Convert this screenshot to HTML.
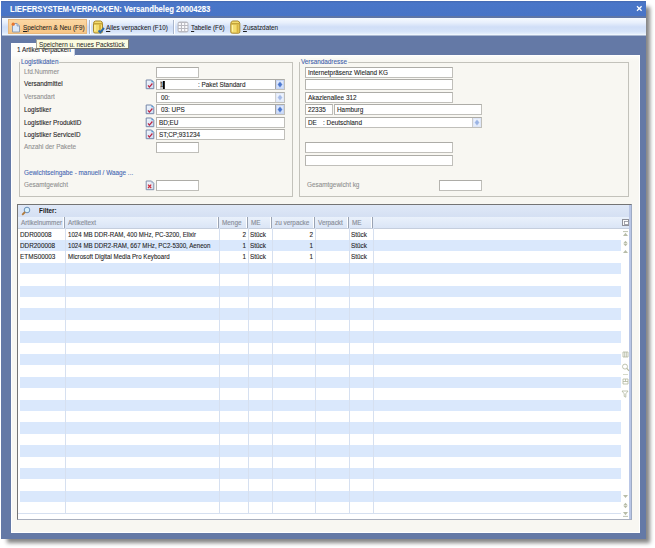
<!DOCTYPE html>
<html><head><meta charset="utf-8">
<style>
*{box-sizing:border-box;margin:0;padding:0}
html,body{width:655px;height:548px;overflow:hidden;background:#fff;position:relative}
body{font-family:"Liberation Sans",sans-serif;font-size:7px;color:#1e1e1e}
.a{position:absolute}
.t{position:absolute;white-space:pre;line-height:8px;transform:scaleX(.91);transform-origin:0 0;-webkit-text-stroke:.1px currentColor}
#shadowR{left:646px;top:7px;width:6px;height:537px;background:linear-gradient(90deg,rgba(0,0,0,.45),rgba(0,0,0,0))}
#shadowB{left:5px;top:538px;width:643px;height:6px;background:linear-gradient(180deg,rgba(0,0,0,.45),rgba(0,0,0,0))}
#win{left:1px;top:1px;width:645px;height:538px;background:#6479a6;box-shadow:5px 5px 4px -1px rgba(0,0,0,.48)}
#title{left:1px;top:1px;width:645px;height:15px;background:linear-gradient(180deg,#4569b0 0,#4a76c8 2px,#4874c6 100%)}
#titleline{left:1px;top:16px;width:645px;height:2px;background:#5f76a6}
#tb{left:2px;top:18px;width:644px;height:18px;background:linear-gradient(180deg,#f6faff 0%,#e8f0fc 25%,#d0def7 50%,#d6e4f9 75%,#e4effc 88%,#f6fcff 94%,#6a80ab 100%)}
#panel{left:11px;top:55px;width:629px;height:478px;background:linear-gradient(180deg,#fdfdfb 0,#f8f7f2 6px);box-shadow:inset 1px 1px 0 #fff,inset -1px -1px 0 #fff}
.sep{position:absolute;top:20px;width:1px;height:14px;background:#a9b6cc;box-shadow:1px 0 0 #fff}
.grp{position:absolute;border:1px solid #c3c2bb}
.gt{position:absolute;color:#4262ac;background:#f8f7f2;padding:0 1px}
.dis{color:#8f8f8f}
.inp{position:absolute;background:#fff;border:1px solid #c0bfba;border-top-color:#adaca7;border-left-color:#b5b4af;height:11px}
.inp span{position:absolute;top:1px;white-space:pre;line-height:8px;transform:scaleX(.91);transform-origin:0 0;-webkit-text-stroke:.1px currentColor}
.dd{position:absolute;right:0;top:0;width:9px;height:9px;background:linear-gradient(180deg,#e4ecfc,#cddcf8);border-left:1px solid #a3a3a3;box-shadow:inset 0 0 0 1px #c5d4f3}
.ico{position:absolute;width:9px;height:10px}
.hd{position:absolute;top:217px;height:11px;background:linear-gradient(180deg,#eaf1fb,#dae5f6);border-right:1px solid #9aa3b3;box-shadow:inset -1px 0 0 #fff}
.hd span{position:absolute;left:2px;top:1.5px;color:#8a8f99;white-space:pre;line-height:8px;transform:scaleX(.91);transform-origin:0 0;-webkit-text-stroke:.15px currentColor}
.row{position:absolute;left:20px;width:601px;height:11.4px}
.vl{position:absolute;top:228px;width:1px;height:285px;background:#d6e0f0}
</style></head><body>
<div class="a" id="win"></div>
<div class="a" id="title"></div>
<div class="t" style="left:10px;top:4.5px;font-size:8.6px;font-weight:bold;color:#fff;letter-spacing:0;transform:scaleX(.895);transform-origin:0 0;line-height:9px">LIEFERSYSTEM-VERPACKEN: Versandbeleg 20004283</div>
<svg class="a" style="left:636px;top:5px" width="7" height="7"><path d="M1 1.2L5.6 5.8M5.6 1.2L1 5.8" stroke="#fff" stroke-width="1.25"/></svg>
<div class="a" id="titleline"></div>
<div class="a" id="tb"></div>
<div class="a" style="left:8px;top:19px;width:79px;height:15px;background:linear-gradient(180deg,#fbd7a3,#f7c584);border:1px solid #e9b87c"></div>
<div class="sep" style="left:89px"></div>
<div class="sep" style="left:173px"></div>
<!-- toolbar icons -->
<svg class="a" style="left:11px;top:22px" width="10" height="11"><path d="M1.5 1.5h4.5l2.5 2.5v6h-7z" fill="#dce8f8" stroke="#8f9cb0" stroke-width="1"/><path d="M6 1.5v2.5h2.5" fill="#b8c8e0" stroke="#8f9cb0" stroke-width=".8"/><circle cx="2.2" cy="2.2" r="1.6" fill="#e8742a"/></svg>
<svg class="a" style="left:92px;top:20px" width="13" height="14"><path d="M1.5 3.5q0-2 2-2.5h5q2 .5 2 2.5v8q0 1.5-1.5 1.5h-6q-1.5 0-1.5-1.5z" fill="#f3dc6e" stroke="#a8862a" stroke-width="1"/><path d="M2 3.8h8.5" stroke="#b9962e" stroke-width="1.2"/><path d="M8 4.5v8" stroke="#d9b440" stroke-width="2"/><path d="M3 5v6" stroke="#fff3a8" stroke-width="1.2"/><path d="M6.5 10.5l1.8 1.8 3.7-4.3" fill="none" stroke="#2d6aa8" stroke-width="2"/></svg>
<svg class="a" style="left:177px;top:21px" width="12" height="12"><rect x=".5" y=".5" width="11" height="11" rx="2.5" fill="#b9b9c0"/><g fill="#fafafc"><rect x="1.7" y="2" width="2.2" height="2"/><rect x="5" y="2" width="2.2" height="2"/><rect x="8.2" y="2" width="2.2" height="2"/><rect x="1.7" y="5" width="2.2" height="2"/><rect x="5" y="5" width="2.2" height="2"/><rect x="8.2" y="5" width="2.2" height="2"/><rect x="1.7" y="8" width="2.2" height="2"/><rect x="5" y="8" width="2.2" height="2"/><rect x="8.2" y="8" width="2.2" height="2"/></g></svg>
<svg class="a" style="left:230px;top:20px" width="11" height="14"><path d="M.8 3.5q0-2 2-2.5h5q2 .5 2 2.5v8.5q0 1.2-1.5 1.2h-6q-1.5 0-1.5-1.2z" fill="#f3dc6e" stroke="#a8862a" stroke-width="1"/><path d="M1.2 3.8h8.2" stroke="#b9962e" stroke-width="1.2"/><path d="M7.6 4.5v8.3" stroke="#d9b440" stroke-width="2"/><path d="M2.5 5v6.5" stroke="#fff3a8" stroke-width="1.2"/></svg>
<div class="t" style="left:23px;top:23.5px;color:#1a1a1a;-webkit-text-stroke:.05px #222"><u>S</u>peichern &amp; Neu (F9)</div>
<div class="t" style="left:106px;top:23.5px;color:#1a1a1a;-webkit-text-stroke:.05px #222"><u>A</u>lles verpacken (F10)</div>
<div class="t" style="left:191px;top:23.5px;color:#1a1a1a;-webkit-text-stroke:.05px #222"><u>T</u>abelle (F6)</div>
<div class="t" style="left:243px;top:23.5px;color:#1a1a1a;-webkit-text-stroke:.05px #222"><u>Z</u>usatzdaten</div>

<div class="a" id="panel"></div>
<!-- tab -->
<div class="a" style="left:11px;top:43px;width:64px;height:13px;background:#fdfdfb;border-top:1px solid #fff;border-left:1px solid #fff;border-right:1px solid #c9d3e6"></div>
<div class="t" style="left:17px;top:46px">1 Artikel verpacken</div>
<!-- tooltip -->
<div class="a" style="left:36px;top:39px;width:93px;height:10px;background:#fbfbe0;border:1px solid #a8a89c;border-bottom-color:#6f6f6a;border-right-color:#7a7a74"></div>
<div class="t" style="left:38.5px;top:40.5px;-webkit-text-stroke:0;color:#222">Speichern u. neues Packstück</div>

<!-- group 1 -->
<div class="grp" style="left:19px;top:62px;width:274px;height:135px"></div>
<div class="gt t" style="left:20px;top:58px">Logistikdaten</div>
<div class="t dis" style="left:24px;top:68px">Lfd.Nummer</div>
<div class="t" style="left:24px;top:80px">Versandmittel</div>
<div class="t dis" style="left:24px;top:93px">Versandart</div>
<div class="t" style="left:24px;top:106px">Logistiker</div>
<div class="t" style="left:24px;top:118.5px">Logistiker ProduktID</div>
<div class="t" style="left:24px;top:131px">Logistiker ServiceID</div>
<div class="t dis" style="left:24px;top:143px">Anzahl der Pakete</div>
<div class="t" style="left:24px;top:169px;color:#4668b2">Gewichtseingabe - manuell / Waage ...</div>
<div class="t dis" style="left:24px;top:181px">Gesamtgewicht</div>

<div class="inp" style="left:156px;top:67px;width:43px"></div>
<div class="inp" style="left:156px;top:79px;width:129px"><span style="left:3px;background:#c8c8c8;color:#333">1</span><span style="left:6px;top:1px;width:2px;height:8px;background:#000"></span><span style="left:41px">: Paket Standard</span><div class="dd"><svg style="position:absolute;left:1px;top:1px" width="7" height="7"><path d="M3 .7Q3.4 .7 5.2 3.5Q3.4 6.3 3 6.3Q2.6 6.3 .8 3.5Q2.6 .7 3 .7z" fill="#4b78cf" stroke="#8aa6e0" stroke-width=".5"/></svg></div></div>
<div class="inp" style="left:156px;top:92px;width:129px"><span style="left:4px">00:</span><div class="dd" style="opacity:.5"><svg style="position:absolute;left:1px;top:1px" width="7" height="7"><path d="M3 .7Q3.4 .7 5.2 3.5Q3.4 6.3 3 6.3Q2.6 6.3 .8 3.5Q2.6 .7 3 .7z" fill="#4b78cf" stroke="#8aa6e0" stroke-width=".5"/></svg></div></div>
<div class="inp" style="left:156px;top:104px;width:129px"><span style="left:4px">03: UPS</span><div class="dd"><svg style="position:absolute;left:1px;top:1px" width="7" height="7"><path d="M3 .7Q3.4 .7 5.2 3.5Q3.4 6.3 3 6.3Q2.6 6.3 .8 3.5Q2.6 .7 3 .7z" fill="#4b78cf" stroke="#8aa6e0" stroke-width=".5"/></svg></div></div>
<div class="inp" style="left:156px;top:117px;width:129px"><span style="left:2px">BD;EU</span></div>
<div class="inp" style="left:156px;top:129px;width:129px"><span style="left:2px">ST;CP;931234</span></div>
<div class="inp" style="left:156px;top:142px;width:43px"></div>
<div class="inp" style="left:156px;top:180px;width:43px"></div>

<svg class="a" style="left:145px;top:79px" width="10" height="11"><defs><linearGradient id="g79" x1="0" y1="0" x2="1" y2="1"><stop offset="0" stop-color="#f4f8fd"/><stop offset="1" stop-color="#c9dbf2"/></linearGradient></defs><path d="M1.2 1h5.3l2.3 2.3v6.4h-7.6z" fill="url(#g79)" stroke="#7586a8" stroke-width="1"/><path d="M6.5 1v2.3h2.3z" fill="#4f93d2"/><path d="M3 6.4l1.4 1.7 3-3.6" fill="none" stroke="#bf2440" stroke-width="1.25"/></svg>
<svg class="a" style="left:145px;top:104px" width="10" height="11"><defs><linearGradient id="g104" x1="0" y1="0" x2="1" y2="1"><stop offset="0" stop-color="#f4f8fd"/><stop offset="1" stop-color="#c9dbf2"/></linearGradient></defs><path d="M1.2 1h5.3l2.3 2.3v6.4h-7.6z" fill="url(#g104)" stroke="#7586a8" stroke-width="1"/><path d="M6.5 1v2.3h2.3z" fill="#4f93d2"/><path d="M3 6.4l1.4 1.7 3-3.6" fill="none" stroke="#bf2440" stroke-width="1.25"/></svg>
<svg class="a" style="left:145px;top:117px" width="10" height="11"><defs><linearGradient id="g117" x1="0" y1="0" x2="1" y2="1"><stop offset="0" stop-color="#f4f8fd"/><stop offset="1" stop-color="#c9dbf2"/></linearGradient></defs><path d="M1.2 1h5.3l2.3 2.3v6.4h-7.6z" fill="url(#g117)" stroke="#7586a8" stroke-width="1"/><path d="M6.5 1v2.3h2.3z" fill="#4f93d2"/><path d="M3 6.4l1.4 1.7 3-3.6" fill="none" stroke="#bf2440" stroke-width="1.25"/></svg>
<svg class="a" style="left:145px;top:129px" width="10" height="11"><defs><linearGradient id="g129" x1="0" y1="0" x2="1" y2="1"><stop offset="0" stop-color="#f4f8fd"/><stop offset="1" stop-color="#c9dbf2"/></linearGradient></defs><path d="M1.2 1h5.3l2.3 2.3v6.4h-7.6z" fill="url(#g129)" stroke="#7586a8" stroke-width="1"/><path d="M6.5 1v2.3h2.3z" fill="#4f93d2"/><path d="M3 6.4l1.4 1.7 3-3.6" fill="none" stroke="#bf2440" stroke-width="1.25"/></svg>
<svg class="a" style="left:145px;top:180px" width="10" height="11"><defs><linearGradient id="gx" x1="0" y1="0" x2="1" y2="1"><stop offset="0" stop-color="#f6f8fc"/><stop offset="1" stop-color="#d3dcea"/></linearGradient></defs><path d="M1.2 1h5.3l2.3 2.3v6.4h-7.6z" fill="url(#gx)" stroke="#8290ac" stroke-width="1"/><path d="M6.5 1v2.3h2.3z" fill="#9fb3cf"/><path d="M3 4.6l3.2 3.4M6.2 4.6l-3.2 3.4" fill="none" stroke="#d02838" stroke-width="1.2"/></svg>
<!-- group 2 -->
<div class="grp" style="left:299px;top:62px;width:330px;height:135px"></div>
<div class="gt t" style="left:300px;top:58px">Versandadresse</div>
<div class="inp" style="left:305px;top:67px;width:148px"><span style="left:2px">Internetpräsenz Wieland KG</span></div>
<div class="inp" style="left:305px;top:79px;width:148px"></div>
<div class="inp" style="left:305px;top:92px;width:148px"><span style="left:2px">Akazienallee 312</span></div>
<div class="inp" style="left:305px;top:104px;width:28px"><span style="left:2px">22335</span></div>
<div class="inp" style="left:334px;top:104px;width:148px"><span style="left:2px">Hamburg</span></div>
<div class="inp" style="left:305px;top:117px;width:177px"><span style="left:2px">DE</span><span style="left:17px">: Deutschland</span><div class="dd" style="opacity:.55"><svg style="position:absolute;left:1px;top:1px" width="7" height="7"><path d="M3 .7Q3.4 .7 5.2 3.5Q3.4 6.3 3 6.3Q2.6 6.3 .8 3.5Q2.6 .7 3 .7z" fill="#4b78cf" stroke="#8aa6e0" stroke-width=".5"/></svg></div></div>
<div class="inp" style="left:305px;top:142px;width:148px"></div>
<div class="inp" style="left:305px;top:155px;width:148px"></div>
<div class="t dis" style="left:307px;top:181px">Gesamtgewicht kg</div>
<div class="inp" style="left:439px;top:180px;width:43px"></div>

<!-- grid -->
<div class="a" id="grid" style="left:17px;top:204px;width:615px;height:316px;background:#fff;border:1px solid #747474;border-right-color:#9eabc4;border-bottom-color:#a9afbd"></div>
<div class="a" style="left:18px;top:205px;width:611px;height:12px;background:linear-gradient(180deg,#dfe8f7,#d5e0f3)"></div>
<svg class="a" style="left:21px;top:206px" width="10" height="10"><circle cx="6" cy="4" r="2.8" fill="#d8f0fb" stroke="#6a8fb8" stroke-width="1"/><path d="M4 6L1.2 8.8" stroke="#b07a3a" stroke-width="1.8"/></svg>
<div class="t" style="left:39px;top:207px;font-weight:bold;color:#1a1a1a;-webkit-text-stroke:0">Filter:</div>
<div class="hd" style="left:18px;width:47px;"><span style="left:3px">Artikelnummer</span></div>
<div class="hd" style="left:65px;width:154px;"><span style="left:3px">Artikeltext</span></div>
<div class="hd" style="left:219px;width:29px;"><span style="left:3px">Menge</span></div>
<div class="hd" style="left:248px;width:24px;"><span style="left:3px">ME</span></div>
<div class="hd" style="left:272px;width:43px;"><span style="left:3px">zu verpacke</span></div>
<div class="hd" style="left:315px;width:34px;"><span style="left:3px">Verpackt</span></div>
<div class="hd" style="left:349px;width:24px;"><span style="left:3px">ME</span></div>
<div class="hd" style="left:373px;width:248px;border-right:none;box-shadow:none;"><span style="left:3px"></span></div>
<div class="a" style="left:621px;top:217px;width:8px;height:11px;background:linear-gradient(180deg,#eaf1fb,#dae5f6)"></div>
<div class="a" style="left:18px;top:228px;width:611px;height:1px;background:#c5cedd"></div>
<div class="row" style="top:228.6px;background:#ffffff"></div>
<div class="row" style="top:240.0px;background:#dae8fc"></div>
<div class="row" style="top:251.4px;background:#ffffff"></div>
<div class="row" style="top:262.8px;background:#dae8fc"></div>
<div class="row" style="top:274.2px;background:#ffffff"></div>
<div class="row" style="top:285.6px;background:#dae8fc"></div>
<div class="row" style="top:297.0px;background:#ffffff"></div>
<div class="row" style="top:308.4px;background:#dae8fc"></div>
<div class="row" style="top:319.8px;background:#ffffff"></div>
<div class="row" style="top:331.2px;background:#dae8fc"></div>
<div class="row" style="top:342.6px;background:#ffffff"></div>
<div class="row" style="top:354.0px;background:#dae8fc"></div>
<div class="row" style="top:365.4px;background:#ffffff"></div>
<div class="row" style="top:376.8px;background:#dae8fc"></div>
<div class="row" style="top:388.2px;background:#ffffff"></div>
<div class="row" style="top:399.6px;background:#dae8fc"></div>
<div class="row" style="top:411.0px;background:#ffffff"></div>
<div class="row" style="top:422.4px;background:#dae8fc"></div>
<div class="row" style="top:433.8px;background:#ffffff"></div>
<div class="row" style="top:445.2px;background:#dae8fc"></div>
<div class="row" style="top:456.6px;background:#ffffff"></div>
<div class="row" style="top:468.0px;background:#dae8fc"></div>
<div class="row" style="top:479.4px;background:#ffffff"></div>
<div class="row" style="top:490.8px;background:#dae8fc"></div>
<div class="row" style="top:502.2px;background:#ffffff"></div>
<div class="vl" style="left:65px"></div>
<div class="vl" style="left:219px"></div>
<div class="vl" style="left:248px"></div>
<div class="vl" style="left:272px"></div>
<div class="vl" style="left:315px"></div>
<div class="vl" style="left:349px"></div>
<div class="vl" style="left:373px"></div>
<div class="a" style="left:18px;top:513px;width:603px;height:1px;background:#d6e0f0"></div>
<div class="t" style="left:19.5px;top:230.6px">DDR00008</div>
<div class="t" style="transform:scaleX(.88);left:68px;top:230.6px">1024 MB DDR-RAM, 400 MHz, PC-3200, Elixir</div>
<div class="t" style="left:200px;width:46px;text-align:right;transform-origin:100% 0;top:230.6px">2</div>
<div class="t" style="left:249.5px;top:230.6px">Stück</div>
<div class="t" style="left:270px;width:43px;text-align:right;transform-origin:100% 0;top:230.6px">2</div>
<div class="t" style="left:350.5px;top:230.6px">Stück</div>
<div class="t" style="left:19.5px;top:242.0px">DDR200008</div>
<div class="t" style="transform:scaleX(.88);left:68px;top:242.0px">1024 MB DDR2-RAM, 667 MHz, PC2-5300, Aeneon</div>
<div class="t" style="left:200px;width:46px;text-align:right;transform-origin:100% 0;top:242.0px">1</div>
<div class="t" style="left:249.5px;top:242.0px">Stück</div>
<div class="t" style="left:270px;width:43px;text-align:right;transform-origin:100% 0;top:242.0px">1</div>
<div class="t" style="left:350.5px;top:242.0px">Stück</div>
<div class="t" style="left:19.5px;top:253.4px">ETMS00003</div>
<div class="t" style="transform:scaleX(.88);left:68px;top:253.4px">Microsoft Digital Media Pro Keyboard</div>
<div class="t" style="left:200px;width:46px;text-align:right;transform-origin:100% 0;top:253.4px">1</div>
<div class="t" style="left:249.5px;top:253.4px">Stück</div>
<div class="t" style="left:270px;width:43px;text-align:right;transform-origin:100% 0;top:253.4px">1</div>
<div class="t" style="left:350.5px;top:253.4px">Stück</div>
<div class="a" style="left:629px;top:205px;width:2px;height:314px;background:#b9c6e6"></div>

<svg class="a" style="left:621px;top:218px" width="9" height="9"><rect x="1.5" y="1.5" width="6" height="6" fill="#fafafa" stroke="#8e9099"/><rect x="3.5" y="3.5" width="4" height="3" fill="#fff" stroke="#8e9099" stroke-width=".8"/></svg>
<svg class="a" style="left:622px;top:231px" width="7" height="6"><path d="M1 .6h5" stroke="#b7bca8" stroke-width=".9"/><path d="M3.5 1.8L1 5h5z" fill="#b7bca8"/></svg>
<svg class="a" style="left:622px;top:240px" width="7" height="7"><path d="M3.5 .8L1.3 3.2h4.4zM3.5 6.2L1.3 3.8h4.4z" fill="#b7bca8"/></svg>
<svg class="a" style="left:622px;top:249px" width="7" height="5"><path d="M3.5 1L1 4h5z" fill="#b7bca8"/></svg>
<svg class="a" style="left:622px;top:351px" width="7" height="7"><path d="M1 1h5v5h-5zM2.7 1v5M4.3 1v5" fill="none" stroke="#b0b69e" stroke-width=".8"/></svg>
<svg class="a" style="left:621px;top:363px" width="9" height="9"><circle cx="4" cy="3.6" r="2.5" fill="none" stroke="#b0b69e" stroke-width=".8"/><path d="M5.8 5.4L8 7.8" stroke="#b0b69e" stroke-width="1.1"/></svg>
<svg class="a" style="left:622px;top:374px" width="7" height="2"><path d="M1 .5h5" stroke="#d4d8c8" stroke-width="1"/></svg>
<svg class="a" style="left:622px;top:378px" width="7" height="7"><path d="M1 1h5v5h-5zM1 3.5h5M3.5 1v2.5" fill="none" stroke="#b0b69e" stroke-width=".8"/></svg>
<svg class="a" style="left:621px;top:390px" width="8" height="8"><path d="M1 1h6L4.8 3.8v3.4l-1.6-.8V3.8z" fill="none" stroke="#b0b69e" stroke-width=".8"/></svg>
<svg class="a" style="left:622px;top:494px" width="7" height="5"><path d="M3.5 4L1 1h5z" fill="#b7bca8"/></svg>
<svg class="a" style="left:622px;top:502px" width="7" height="7"><path d="M3.5 .8L1.3 3.2h4.4zM3.5 6.2L1.3 3.8h4.4z" fill="#b7bca8"/></svg>
<svg class="a" style="left:622px;top:511px" width="7" height="6"><path d="M1 5.4h5" stroke="#b7bca8" stroke-width=".9"/><path d="M3.5 4.2L1 1h5z" fill="#b7bca8"/></svg>

</body></html>
